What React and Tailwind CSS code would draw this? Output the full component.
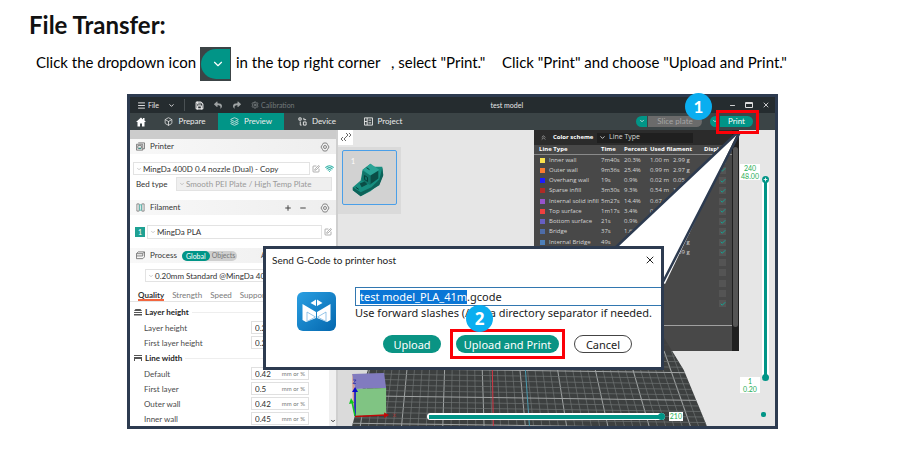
import React from "react";
import {
  Menu, ChevronDown, Save, Box, Layers, Minus, X, Plus,
  SquarePen, Wifi, Check, ChevronsUp, Settings,
} from "lucide-react";
import { FaReply, FaShare } from "react-icons/fa";

const LEGEND = [
  ["#fbe44d", "Inner wall", "7m40s", "20.3%", "1.00 m", "2.99 g", true],
  ["#f97b32", "Outer wall", "9m36s", "25.4%", "0.99 m", "2.97 g", true],
  ["#1b1bff", "Overhang wall", "19s", "0.9%", "0.02 m", "0.05 g", true],
  ["#ae2b26", "Sparse infill", "3m30s", "9.3%", "0.54 m", "1.62 g", true],
  ["#9654cc", "Internal solid infill", "5m27s", "14.4%", "0.67 m", "2.01 g", true],
  ["#ef4040", "Top surface", "1m17s", "3.4%", "0.16 m", "0.49 g", true],
  ["#665fc4", "Bottom surface", "21s", "0.9%", "0.05 m", "0.16 g", true],
  ["#4d6ca8", "Bridge", "37s", "1.6%", "0.08 m", "0.23 g", true],
  ["#4d80ba", "Internal Bridge", "49s", "2.2%", "0.10 m", "0.31 g", true],
  ["#ffffff", "Gap infill", "22s", "1.0%", "0.03 m", "0.09 g", true],
  ["", "", "", "", "", "", false],
  ["", "", "", "", "", "", false],
  ["", "", "", "", "", "", false],
  ["", "", "", "", "", "", false],
  ["", "", "", "", "", "", true],
];

function HexGear() {
  return (
    <svg viewBox="0 0 20 20" className="size-[10px]" fill="none" stroke="#6b6b6b" strokeWidth="1.6">
      <path d="M7 2h6l2 3 3 5-3 5-2 3H7l-2-3-3-5 3-5z" />
      <circle cx="10" cy="10" r="3" />
    </svg>
  );
}

function SectionBar({ icon, title, children }) {
  return (
    <div className="flex h-[15px] items-center gap-[5px] bg-gradient-to-r from-[#f8f8f8] to-[#eeeeee] pr-[6px] pl-[6px]">
      {icon}
      <h2 className="pb-px text-[8px] text-[#363636]">{title}</h2>
      {children}
    </div>
  );
}

function Drop({ label, className, children }) {
  return (
    <button type="button" aria-label={label} className={"flex items-center gap-px overflow-hidden border border-[#e3e3e3] pl-[2px] text-left text-[8px] whitespace-nowrap " + className}>
      <ChevronDown className="size-[6px] shrink-0 text-[#999]" />
      {children}
    </button>
  );
}

function Field({ id, label, value, unit }) {
  return (
    <div className="flex h-[15px] items-center pl-[14px]">
      <label htmlFor={id} className="w-[107px] text-[8px] text-[#4a4a4a]">{label}</label>
      <div className="flex h-[13px] w-[58px] items-center border border-[#e0e0e0] pr-[3px] pl-[3px]">
        <input id={id} defaultValue={value} className="w-6 min-w-0 flex-1 bg-transparent text-[8px] text-[#2c2c2c] outline-none" />
        <span className="text-[6px] whitespace-nowrap text-[#777]">{unit}</span>
      </div>
    </div>
  );
}

function GroupTitle({ icon, children }) {
  return (
    <div className="flex h-4 items-center gap-[3px] pl-1">
      {icon}
      <h3 className="text-[8px] font-bold text-[#262626]">{children}</h3>
      <span className="h-px flex-1 bg-[#eeeeee]" />
    </div>
  );
}

function TitleBar() {
  return (
    <div className="grid h-4 grid-cols-[3fr_auto_2fr] items-center bg-[#252c2f] text-[7px] text-[#e8e8e8]">
      <div className="flex items-center pl-[7px]">
        <button type="button" className="flex items-center gap-[2px]">
          <Menu className="size-[9px]" strokeWidth={2.5} />File
        </button>
        <button type="button" aria-label="More" className="ml-[9px]"><ChevronDown className="size-[7px]" strokeWidth={3} /></button>
        <span className="ml-[9px] h-3 w-px bg-[#4a5154]" />
        <button type="button" aria-label="Save" className="ml-[10px]"><Save className="size-[9px]" strokeWidth={3} /></button>
        <button type="button" aria-label="Undo" className="ml-[10px] text-[#9ea2a3]"><FaReply className="size-2" /></button>
        <button type="button" aria-label="Redo" className="ml-[11px] text-[#9ea2a3]"><FaShare className="size-2" /></button>
        <button type="button" className="ml-[10px] flex items-center gap-[2px] text-[#73797b]">
          <Settings className="size-2" strokeWidth={3} />Calibration
        </button>
      </div>
      <h1 className="w-[102px] text-center">test model</h1>
      <div className="flex items-center justify-end gap-[9px] pr-[5px]">
        <button type="button" aria-label="Minimize"><Minus className="size-[7px]" strokeWidth={3} /></button>
        <button type="button" aria-label="Maximize">
          <svg viewBox="0 0 8 8" className="size-2" fill="none" stroke="#ddd"><path d="M.5 1.5h7v5h-7zM.5 2.5h7" /></svg>
        </button>
        <button type="button" aria-label="Close window"><X className="size-[8px]" strokeWidth={2.5} /></button>
      </div>
    </div>
  );
}

function Step({ children, className }) {
  return (
    <span className={"absolute z-30 flex size-[27px] items-center justify-center rounded-full bg-[#0aaef0] text-[17px] leading-none font-bold text-white " + className}>
      {children}
    </span>
  );
}

function NavBar() {
  return (
    <div className="flex h-[17px] items-stretch bg-[#3b4446] text-[8px] text-[#ededed]">
      <button type="button" aria-label="Home" className="flex w-[22px] items-center justify-center">
        <svg viewBox="0 0 20 20" className="size-[10px]" fill="#fff"><path d="M10 1L0 10h3v9h5v-6h4v6h5v-9h3l-3-3V2h-3v3z" /></svg>
      </button>
      <button type="button" className="flex w-[66px] items-center justify-center gap-[5px] pb-px"><Box className="size-[9px]" />Prepare</button>
      <button type="button" className="flex w-[66px] items-center justify-center gap-[5px] bg-[#019587] pb-px"><Layers className="size-[9px]" />Preview</button>
      <button type="button" className="flex w-[66px] items-center justify-center gap-[5px] pb-px">
        <svg viewBox="0 0 20 20" className="size-[9px]" fill="none" stroke="currentColor" strokeWidth="2"><path d="M2 2h5v5H2zM13 2v4h5M5 10v8h3M12 11h6v7h-6z" /></svg>
        Device
      </button>
      <button type="button" className="flex w-[66px] items-center justify-center gap-[5px] pb-px">
        <svg viewBox="0 0 20 20" className="size-[9px]" fill="none" stroke="currentColor" strokeWidth="2"><path d="M1 2h18v16H1zM7 2v16M10 7h6M10 13h6M1 10h6" /></svg>
        Project
      </button>
      <div className="ml-auto flex items-center gap-2 pr-[22px] pb-px">
        <div className="flex h-[11px] gap-px">
          <button type="button" aria-label="Slice options" className="flex w-[11px] items-center justify-center rounded-l-full bg-[#019587]"><ChevronDown className="size-[6px]" strokeWidth={3} /></button>
          <button type="button" className="flex w-[54px] items-center justify-center rounded-r-full bg-[#6b6b6b] text-[#a5a5a5]">Slice plate</button>
        </div>
        <div className="relative flex h-[11px] gap-px">
          <Step className="-top-[23px] -left-[25px]">1</Step>
          <button type="button" aria-label="Print options" className="flex w-[9px] items-center justify-center rounded-l-full bg-[#019587]"><ChevronDown className="size-[6px]" strokeWidth={3} /></button>
          <button type="button" className="flex w-[33px] items-center justify-center rounded-r-full bg-[#019587] text-white">Print</button>
          <span className="absolute -top-[6px] -right-[6px] z-20 h-6 w-[43px] border-[3px] border-[#fb0007]" />
        </div>
      </div>
    </div>
  );
}

function PrintSettings() {
  return (
    <aside className="w-[208px] shrink-0 border-r-2 border-[#cfcfcf] bg-white text-[#333]">
      <div className="h-[9px] bg-[#cccccc]" />
      <SectionBar title="Printer" icon={
        <svg viewBox="0 0 20 20" className="size-[9px]" fill="none" stroke="#666" strokeWidth="1.8"><path d="M5 2h14v13h-4M1 5h14v13H1zM4 8h8v6H4z" /><path d="M6 14h5" stroke="#019587" /></svg>}>
        <button type="button" aria-label="Printer settings" className="ml-auto"><HexGear /></button>
      </SectionBar>
      <div className="mt-2 flex h-[13px] items-center pl-[3px]">
        <Drop label="Printer preset" className="h-[13px] w-[177px]">MingDa 400D 0.4 nozzle (Dual) - Copy</Drop>
        <button type="button" aria-label="Edit printer" className="ml-[2px]"><SquarePen className="size-[8px] text-[#888]" /></button>
        <Wifi className="ml-[5px] size-[9px] text-[#35b3a8]" strokeWidth={3} />
      </div>
      <div className="mt-[2px] flex h-[14px] items-center pl-[6px]">
        <span className="w-10 text-[8px]">Bed type</span>
        <Drop label="Bed type" className="h-[14px] w-[156px] bg-[#efefef] text-[#999]">Smooth PEI Plate / High Temp Plate</Drop>
      </div>
      <div className="mt-[9px]">
        <SectionBar title="Filament" icon={
          <svg viewBox="0 0 20 20" className="size-[9px]" fill="none" stroke="#777" strokeWidth="1.8"><path d="M2 2h5v16H2zM13 2h5v16h-5z" /><path d="M8 4h4v12H8z" stroke="#4db6ac" /></svg>}>
          <span className="ml-auto flex items-center gap-[7px] text-[#444]">
            <button type="button" aria-label="Add filament"><Plus className="size-2" strokeWidth={3} /></button>
            <button type="button" aria-label="Remove filament" className="mr-[6px]"><Minus className="size-2" strokeWidth={3} /></button>
            <button type="button" aria-label="Filament settings"><HexGear /></button>
          </span>
        </SectionBar>
      </div>
      <div className="mt-[10px] flex h-[14px] items-center pl-[5px]">
        <span className="flex size-[10px] items-center justify-center bg-[#1fa193] text-[7px] text-white">1</span>
        <Drop label="Filament preset" className="ml-[2px] h-[14px] w-[175px]">MingDa PLA</Drop>
        <button type="button" aria-label="Edit filament" className="ml-[2px]"><SquarePen className="size-[8px] text-[#888]" /></button>
      </div>
      <div className="mt-[9px]">
        <SectionBar title="Process" icon={
          <svg viewBox="0 0 20 20" className="size-[9px]" fill="none" stroke="#666" strokeWidth="1.8"><path d="M5 2h14l-4 4H1zM1 6v5h14V6M1 11v6h14l4-4V2" /></svg>}>
          <div className="flex h-[10px] items-center rounded-full bg-[#cfcfcf] text-[7px]">
            <button type="button" className="h-[10px] rounded-full bg-[#019587] px-1 text-white">Global</button>
            <button type="button" className="px-[2px] text-[#777]">Objects</button>
          </div>
          <span className="ml-auto w-[69px] text-[7px]">Advanced</span>
        </SectionBar>
      </div>
      <Drop label="Process preset" className="mt-[6px] ml-[15px] h-[13px] w-[177px]">0.20mm Standard @MingDa 400D</Drop>
      <nav className="mt-[6px] flex h-[14px] items-stretch gap-2 border-b border-[#e4e4e4] pl-2 text-[8px] leading-[14px] text-[#7a7a7a]">
        <a href="#quality" className="border-b-2 border-[#f2663f] font-bold text-[#333]">Quality</a>
        <a href="#strength">Strength</a>
        <a href="#speed">Speed</a>
        <a href="#support">Support</a>
      </nav>
      <div className="mt-[2px] flex">
        <div className="min-w-0 flex-1">
          <GroupTitle icon={<svg viewBox="0 0 8 8" className="size-2" fill="#555"><path d="M1.500 1h5L8 3H0zM0 4h8v1H0zM0 6h8v1.500H0z" /></svg>}>Layer height</GroupTitle>
          <Field id="lh" label="Layer height" value="0.2" unit="mm" />
          <Field id="flh" label="First layer height" value="0.2" unit="mm" />
          <GroupTitle icon={<svg viewBox="0 0 8 8" className="size-2" fill="#555"><path d="M0 1h8v1H0zM0 3h8v2H0zM0 5h1v2H0zM7 5h1v2H7z" /></svg>}>Line width</GroupTitle>
          <Field id="def" label="Default" value="0.42" unit="mm or %" />
          <Field id="fl" label="First layer" value="0.5" unit="mm or %" />
          <Field id="ow" label="Outer wall" value="0.42" unit="mm or %" />
          <Field id="iw" label="Inner wall" value="0.45" unit="mm or %" />
        </div>
        <div className="flex w-[7px] items-end justify-center bg-[#f0f0f0] pb-[2px]"><ChevronDown className="size-[6px]" strokeWidth={4} /></div>
      </div>
    </aside>
  );
}

function Legend() {
  return (
    <section className="relative flex h-[221px] w-[205px] shrink-0 bg-[#3f3f3f]/95 font-['Open_Sans',sans-serif] text-[6px] text-[#d6d6d6]">
      <div className="min-w-0 flex-1">
        <div className="flex h-[15px] items-center bg-[#2b2b2b] pl-[6px]">
          <ChevronsUp className="size-[7px]" />
          <h2 className="ml-[6px] w-[44px] font-bold whitespace-nowrap text-white">Color scheme</h2>
          <button type="button" className="flex h-[10px] w-[96px] items-center gap-[3px] bg-[#1f1f1f] pl-[2px] text-[7px]"><ChevronDown className="size-[7px]" strokeWidth={3} />Line Type</button>
        </div>
        <table className="h-[164px] w-full table-fixed border-collapse text-left leading-[9px] whitespace-nowrap">
          <colgroup>
            <col className="w-[67px]" /><col className="w-[23px]" /><col className="w-[26px]" /><col className="w-[23px]" /><col className="w-[31px]" /><col />
          </colgroup>
          <thead>
            <tr className="border-b border-[#8a8a8a] text-white">
              <th className="pl-[5px]">Line Type</th><th>Time</th><th>Percent</th><th colSpan={2}>Used filament</th><th>Display</th>
            </tr>
          </thead>
          <tbody>
            {LEGEND.map(([color, name, time, pct, len, mass, on], i) => (
              <tr key={i}>
                <td className="pl-[6px]">
                  <div className="flex h-[9px] items-center gap-[4px]">
                    {name && <span className="size-[5px] shrink-0" style={{ background: color }} />}
                    {name}
                  </div>
                </td>
                <td>{time}</td><td>{pct}</td><td>{len}</td><td>{mass}</td>
                <td>
                  <label className="relative ml-[15px] flex size-[7px] items-center justify-center bg-[#545454]">
                    <input type="checkbox" defaultChecked={on} aria-label={name || "Option " + i} className="absolute inset-0 appearance-none" />
                    {on && <Check className="size-[6px] text-[#12a594]" strokeWidth={4} />}
                  </label>
                </td>
              </tr>
            ))}
          </tbody>
        </table>
        <div className="mt-4 h-px bg-[#a0a0a0]" />
      </div>
      <div className="w-[7px] bg-[#1f1f1f] px-px pt-[17px]"><div className="h-[180px] rounded-sm bg-[#555]" /></div>
    </section>
  );
}

function Bed() {
  const v = Array.from({ length: 44 }, (_, i) => i / 43);
  const h = Array.from({ length: 30 }, (_, i) => i);
  return (
    <svg viewBox="0 0 436 296" preserveAspectRatio="none" className="absolute inset-0 size-full" fill="none">
      <clipPath id="bed"><path d="M50 168H301L368 296H14z M301 168L345 240L368 296z" /></clipPath>
      <path d="M0 240H30L14 296H0z" fill="#dadada" />
      <g clipPath="url(#bed)">
        <path d="M0 160H436V296H0z" fill="#3d4040" />
        {v.map((t, i) => (
          <path key={i} d={`M${36 + 284 * t} 168L${14 + 354 * t} 296`} stroke={i % 5 === 1 ? "#a0a3a3" : "#707474"} strokeWidth={i % 5 === 1 ? 1 : 0.7} />
        ))}
        {h.map((i) => (
          <path key={i} d={`M0 ${150 + i * 5.5}L436 ${156 + i * 5.5}`} stroke={i % 5 === 1 ? "#a0a3a3" : "#707474"} strokeWidth={i % 5 === 1 ? 1 : 0.7} />
        ))}
        <path d="M154 240L155 296" stroke="#d33745" />
        <path d="M187 240L191 296" stroke="#4b9cb0" />
      </g>
      <path d="M14 244L46 243L48 258L17 259z" fill="#817bbf" />
      <path d="M17 259L48 258V285L17 286z" fill="#80c483" />
      <path d="M14 244L17 259V286L15 280z" fill="#d39a93" />
      <path d="M17 286V260" stroke="#0808cc" strokeWidth="1.500" />
      <path d="M14 262L17 257L20 262z" fill="#0808cc" />
      <path d="M17 286L14 272" stroke="#10c820" strokeWidth="1.500" />
      <path d="M11 274L13 268L16 273z" fill="#10c820" />
      <path d="M17 286.500L48 285" stroke="#c00808" strokeWidth="1.500" />
      <path d="M46 282.500L51 285L46 288z" fill="#c00808" />
      <path d="M55 283.500L58 287M58 283.500L55 287" stroke="#a33" strokeWidth=".7" />
      <path d="M15 250H18L15 253.500H18" stroke="#3333aa" strokeWidth=".8" />
    </svg>
  );
}

function Benchy() {
  return (
    <svg viewBox="0 0 54 54" className="size-full">
      <path d="M10 37L18 30L20 19L28 13L31 16L35 16L40 16L41 24L37 34L28 41L18 46L10 40z" fill="#178d7f" />
      <path d="M10 37L18 42L29 37L37 29L40 17L41 25L37 35L18 46L10 40z" fill="#0d6259" />
      <path d="M20 20L28 25V35L19 30z" fill="#12756a" />
      <path d="M20 19L28 13L37 19L28 25z" fill="#2aa396" />
      <path d="M28 25L36 20V28L28 34z" fill="#0a4d46" />
      <path d="M17 33L22 31L25 34L19 37z" fill="#0a4d46" />
      <path d="M13 37L16 39M22 25L25 27V31L22 29zM24 17L27 19" stroke="#073f39" fill="none" />
    </svg>
  );
}

function Viewport() {
  return (
    <div className="relative flex min-w-0 flex-1 justify-between overflow-hidden bg-[#e6e6e6]">
      <Bed />
      <div className="relative w-[63px]">
        <button type="button" aria-label="Collapse sidebar" className="block size-[15px] bg-white">
          <svg viewBox="0 0 15 15" fill="none" stroke="#444" strokeWidth=".8"><path d="M5 7L3 9L5 11M8 7L6 9L8 11M8 3L10 5L8 7M11 3L13 5L11 7" /></svg>
        </button>
        <div className="mt-[2px] h-[67px] bg-[#dadada] p-[3px] pl-1">
          <button type="button" aria-label="Plate 1" className="relative block size-[55px] rounded-[2px] border border-[#4a9fe8] bg-[#d2d2d2]">
            <span className="absolute top-[5px] left-2 text-[7px] text-white">1</span>
            <Benchy />
          </button>
        </div>
      </div>
      <div className="relative flex">
        <Legend />
        <div className="flex w-9 justify-between pr-[5px] text-center text-[7px] leading-[8px] text-[#1fae55]">
          <div className="ml-px flex w-5 flex-col justify-between pt-[34px] pb-[33px]">
            <span className="bg-white">240<br />48.00</span>
            <span className="bg-white">1<br />0.20</span>
          </div>
          <div className="flex w-[9px] flex-col items-center pt-[46px]">
            <div className="relative h-[205px] w-[7px]">
              <span className="absolute inset-y-[3px] left-0 w-[7px] bg-white" />
              <span className="absolute inset-y-[3px] left-[2px] w-[3px] bg-[#019587]" />
              <span className="absolute bottom-0 left-0 size-[7px] rounded-full bg-[#019587]" />
              <span className="absolute top-0 left-0 flex size-[7px] items-center justify-center rounded-full bg-[#019587]"><Plus className="size-[5px] text-white" strokeWidth={4} /></span>
              <input type="range" aria-label="Layer" defaultValue="240" max="240" className="absolute inset-0 m-0 h-full w-[7px] appearance-none opacity-0 [direction:rtl] [writing-mode:vertical-lr]" />
            </div>
            <span className="mt-[31px] mr-1 size-[5px] rounded-[2px] bg-[#019587]" />
          </div>
        </div>
      </div>
      <div className="absolute right-[92px] bottom-[5px] left-[89px] flex h-[9px] items-center">
        <div className="relative flex h-[7px] flex-1 items-center rounded-full bg-white px-[2px]">
          <span className="h-1 flex-1 bg-[#019587]" />
          <span className="absolute right-0 size-[7px] rounded-full bg-[#019587]" />
          <input type="range" aria-label="Move" defaultValue="210" max="210" className="absolute inset-0 m-0 size-full appearance-none opacity-0" />
        </div>
        <span className="ml-1 bg-white px-px text-[7px] leading-[9px] text-[#1fae55]">210</span>
      </div>
    </div>
  );
}

function Logo() {
  return (
    <svg viewBox="0 0 39 39" className="size-[39px] shrink-0">
      <defs><linearGradient id="lg" x1="0" y1="0" x2="1" y2="1"><stop offset="0" stopColor="#2a9fe2" /><stop offset="1" stopColor="#0467ae" /></linearGradient></defs>
      <rect width="39" height="39" rx="6" fill="url(#lg)" />
      <path d="M13.500 11L19 7.500V14zM25.500 11L20 7.500V14z" fill="#fff" />
      <path d="M5.500 12L19 20V26L9 30L5.500 28zM33.500 12L20 20V26L30 30L33.500 28z" fill="#fff" />
      <path d="M10 20L18.500 25L10 29.500zM29 20L20.500 25L29 29.500z" fill="#fff" stroke="#6aaede" strokeWidth=".7" />
    </svg>
  );
}

function UploadDialog() {
  return (
    <div role="dialog" aria-labelledby="dlg-title" className="absolute top-[149px] right-[111px] left-[133px] z-10 h-[124px] border-[3px] border-[#2d3b50] bg-white font-['Noto_Sans',sans-serif] text-[#222]">
      <div className="flex h-[22px] items-center justify-between pr-[5px] pl-[6px]">
        <h2 id="dlg-title" className="font-['Lato',sans-serif] text-[10px]">Send G-Code to printer host</h2>
        <button type="button" aria-label="Close"><X className="size-[12px]" strokeWidth={2} /></button>
      </div>
      <div className="mt-4 flex items-start">
        <div className="mt-[5px] mr-[19px] ml-[31px]"><Logo /></div>
        <div className="min-w-0 flex-1">
          <label className="relative flex h-[19px] items-center border border-r-0 border-[#3277b0] pl-1 text-[11px] leading-[14px] whitespace-nowrap">
            <input aria-label="File name" defaultValue="test model_PLA_41m.gcode" className="absolute inset-0 opacity-0" />
            <span className="bg-[#0a76d6] text-white">test model_PLA_41m</span><span>.gcode</span>
          </label>
          <p className="text-[11px] leading-[14px] whitespace-nowrap">Use forward slashes (/) as a directory separator if needed.</p>
          <div className="mt-[9px] flex h-[30px] items-center pl-[28px] text-[11px]">
            <button type="button" className="h-[18px] w-[58px] rounded-full bg-[#0a9484] leading-[17px] text-white">Upload</button>
            <div className="relative ml-[9px] border-[3px] border-[#fb0007] p-[3px]">
              <Step className="-top-[27px] left-[13px]">2</Step>
              <button type="button" className="block h-[18px] w-[103px] rounded-full bg-[#0a9484] leading-[17px] whitespace-nowrap text-white">Upload and Print</button>
            </div>
            <button type="button" className="ml-[9px] h-[18px] w-[58px] rounded-full border border-[#444] leading-[15px]">Cancel</button>
          </div>
        </div>
      </div>
    </div>
  );
}

export default function App() {
  return (
    <main className="min-h-[450px] bg-white pt-[9px] font-['Lato',sans-serif] text-black">
      <h1 className="pl-[29px] text-[24px] leading-[32px] font-bold text-[#111]">File Transfer:</h1>
      <div className="mt-[6px] flex h-[34px] items-center pl-9 text-[15px] leading-[22px] whitespace-nowrap">
        <span className="w-[164px] pb-1">Click the dropdown icon</span>
        <span className="flex h-[34px] w-[31px] items-center bg-[#3c4446] pl-px">
          <span className="flex h-[30px] w-[29px] items-center justify-center rounded-l-full bg-[#019587] pl-1"><ChevronDown className="size-[14px] text-white" /></span>
        </span>
        <span className="ml-[5px] w-[155px] pb-1">in the top right corner</span>
        <span className="w-[111px] pb-1">, select "Print."</span>
        <span className="pb-1">Click "Print" and choose "Upload and Print."</span>
      </div>
      <div className="relative mt-[13px] mr-[122px] ml-[127px] border-[3px] border-[#2d3b50]">
        <TitleBar />
        <NavBar />
        <div className="flex">
          <PrintSettings />
          <Viewport />
        </div>
        <svg viewBox="0 0 130 160" className="absolute top-[33px] right-[30px] h-[160px] w-[130px]">
          <path d="M123 2L-4 122L50 154z" fill="#fff" />
          <path d="M123 2L0 118M125 2L48 152" stroke="#2d3b50" strokeWidth="2.500" fill="none" />
        </svg>
        <UploadDialog />
      </div>
    </main>
  );
}
